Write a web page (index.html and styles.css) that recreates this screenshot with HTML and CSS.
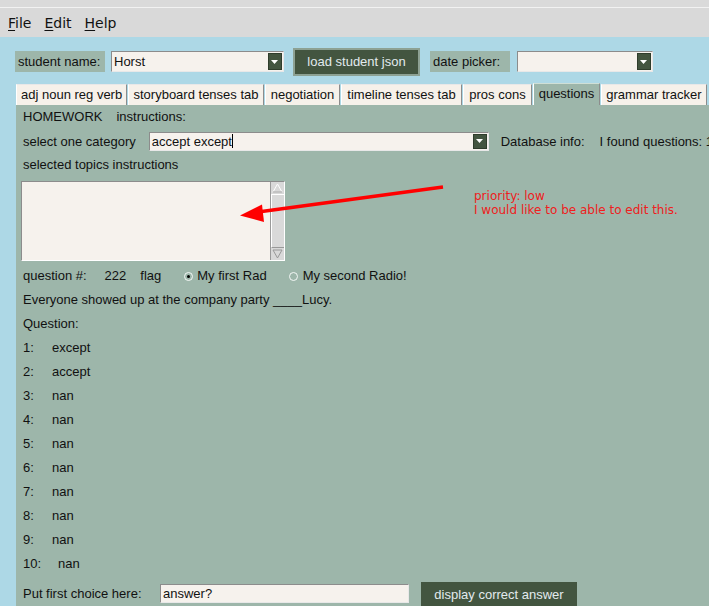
FILE: index.html
```html
<!DOCTYPE html>
<html>
<head>
<meta charset="utf-8">
<link rel="stylesheet" href="styles.css">
</head>
<body>
<div class="window">
  <div class="topstrip"></div>
  <div class="menubar">
    <span class="menu"><u>F</u>ile</span>
    <span class="menu"><u>E</u>dit</span>
    <span class="menu"><u>H</u>elp</span>
  </div>
  <div class="toolbar">
    <span class="lbl lbl-student">student name:</span>
    <div class="combo combo-student">
      <span class="combo-text">Horst</span>
      <span class="drop"><svg width="8" height="6" viewBox="0 0 8 6"><path d="M0 1h7l-3.5 4z" fill="#fff"/></svg></span>
    </div>
    <button class="btn btn-load">load student json</button>
    <span class="lbl lbl-date">date picker:</span>
    <div class="combo combo-date">
      <span class="combo-text"></span>
      <span class="drop"><svg width="8" height="6" viewBox="0 0 8 6"><path d="M0 1h7l-3.5 4z" fill="#fff"/></svg></span>
    </div>
  </div>
  <div class="notebook">
    <div class="tabs">
      <span class="tab t1">adj noun reg verb</span>
      <span class="tab t2">storyboard tenses tab</span>
      <span class="tab t3">negotiation</span>
      <span class="tab t4">timeline tenses tab</span>
      <span class="tab t5">pros cons</span>
      <span class="tab t6 active">questions</span>
      <span class="tab t7">grammar tracker</span>
    </div>
    <div class="panel">
      <div class="row r-home"><span>HOMEWORK</span><span class="instr">instructions:</span></div>
      <div class="row r-cat">
        <span>select one category</span>
        <div class="combo combo-cat">
          <span class="combo-text">accept except<span class="caret"></span></span>
          <span class="drop"><svg width="8" height="6" viewBox="0 0 8 6"><path d="M0 1h7l-3.5 4z" fill="#fff"/></svg></span>
        </div>
        <span class="dbinfo">Database info:</span>
        <span class="found">I found questions: 1</span>
      </div>
      <div class="row r-sel"><span>selected topics instructions</span></div>
      <div class="textarea">
        <div class="ta-body"></div>
        <div class="scrollbar">
          <span class="sb-btn sb-up"><svg width="11" height="10" viewBox="0 0 11 10"><path d="M5.5 1L10 9H1z" fill="#d9d9d9" stroke="#fff" stroke-width="1"/><path d="M10 9H1" stroke="#999"/></svg></span>
          <span class="sb-trough"></span>
          <span class="sb-btn sb-down"><svg width="11" height="10" viewBox="0 0 11 10"><path d="M1 1h9L5.5 9z" fill="#d9d9d9" stroke="#999" stroke-width="1"/></svg></span>
        </div>
      </div>
      <div class="row r-qnum">
        <span class="qlabel">question #:</span>
        <span class="qnum">222</span>
        <span class="flag">flag</span>
        <span class="radio on"></span><span class="rtext">My first Rad</span>
        <span class="radio"></span><span class="rtext">My second Radio!</span>
      </div>
      <div class="row"><span>Everyone showed up at the company party ____Lucy.</span></div>
      <div class="row"><span>Question:</span></div>
      <div class="row"><span class="num">1:</span><span>except</span></div>
      <div class="row"><span class="num">2:</span><span>accept</span></div>
      <div class="row"><span class="num">3:</span><span>nan</span></div>
      <div class="row"><span class="num">4:</span><span>nan</span></div>
      <div class="row"><span class="num">5:</span><span>nan</span></div>
      <div class="row"><span class="num">6:</span><span>nan</span></div>
      <div class="row"><span class="num">7:</span><span>nan</span></div>
      <div class="row"><span class="num">8:</span><span>nan</span></div>
      <div class="row"><span class="num">9:</span><span>nan</span></div>
      <div class="row"><span class="num num10">10:</span><span>nan</span></div>
      <div class="row r-put">
        <span class="putlbl">Put first choice here:</span>
        <div class="entry entry-answer">answer?</div>
        <button class="btn btn-display">display correct answer</button>
      </div>
    </div>
  </div>
  <div class="note">priority: low<br>I would like to be able to edit this.</div>
  <svg class="arrow" width="709" height="606" viewBox="0 0 709 606">
    <line x1="443" y1="187" x2="258" y2="212" stroke="#ff0000" stroke-width="3.5"/>
    <path d="M240 215.5 L262 204.5 L264 222 Z" fill="#ff0000"/>
  </svg>
</div>
</body>
</html>
```

FILE: styles.css
```css
* { box-sizing: border-box; }
html, body { margin: 0; padding: 0; }
body {
  width: 709px;
  height: 606px;
  overflow: hidden;
  background: #add8e6;
  font-family: "Liberation Sans", Arial, sans-serif;
  font-size: 13px;
  color: #111;
}
.window { position: relative; width: 709px; height: 606px; }
.topstrip {
  height: 8px;
  background: #dadada;
  border-bottom: 1px solid #f2f2f2;
}
.menubar {
  height: 29px;
  background: #d9d9d9;
  display: flex;
  align-items: center;
  padding-left: 8px;
  gap: 13px;
  font-family: "DejaVu Sans", sans-serif;
  font-size: 14px;
  color: #111;
}
.menu u { text-decoration-thickness: 1px; text-underline-offset: 2px; }

.toolbar {
  height: 46px;
  display: flex;
  align-items: center;
  padding-left: 15px;
  padding-top: 3px;
}
.toolbar > * { flex-shrink: 0; }
.lbl {
  background: #9db6aa;
  height: 21px;
  line-height: 21px;
  padding: 0 4px 0 3px;
}
.lbl-student { width: 90px; }
.combo {
  display: flex;
  background: #f6f2ed;
  border: 1px solid;
  border-color: #8c8c8c #e8e8e8 #e8e8e8 #8c8c8c;
  height: 21px;
  align-items: stretch;
}
.combo-text {
  flex: 1;
  padding-left: 2px;
  line-height: 19px;
}
.drop {
  width: 14px;
  background: #435540;
  display: flex;
  align-items: flex-end;
  justify-content: center;
  padding-bottom: 4px;
  margin: 1px;
  border: 1px solid #2f3d2c;
}
.combo-student { margin-left: 6px; width: 173px; }
.btn {
  font-family: "Liberation Sans", Arial, sans-serif;
  font-size: 13px;
  background: #435540;
  color: #e2eaee;
  border: 2px solid #8da193;
  padding: 0;
}
.btn-load { margin-left: 9px; width: 127px; height: 28px; }
.lbl-date { margin-left: 10px; width: 80px; }
.combo-date { margin-left: 7px; width: 136px; }

.notebook { margin-left: 16px; }
.tabs {
  display: flex;
  height: 22px;
  align-items: flex-end;
}
.tab {
  flex-shrink: 0;
  height: 21px;
  line-height: 20px;
  background: #f6f1ea;
  border-left: 1px solid #fff;
  border-right: 1px solid #8c8c8c;
  border-top: 1px solid #e8e8e8;
  margin-right: 1px;
  padding: 0 4px;
  text-align: center;
  white-space: nowrap;
}
.tab.active {
  background: #9db6aa;
  height: 22px;
  border-top-color: #cfdfd6;
}
.t1 { width: 111px; }
.t2 { width: 136px; }
.t3 { width: 75px; }
.t4 { width: 121px; }
.t5 { width: 69px; }
.t6 { width: 67px; }
.t7 { width: 106px; }

.panel {
  background: #9db6aa;
  height: 501px;
  padding-left: 5px;
}
.row {
  height: 24px;
  display: flex;
  align-items: center;
  padding-left: 2px;
  white-space: nowrap;
}
.row > * { flex-shrink: 0; }
.r-home { height: 23px; }
.instr { margin-left: 14px; }
.r-cat { height: 26px; }
.combo-cat { margin-left: 13px; width: 340px; height: 19px; }
.combo-cat .combo-text { line-height: 17px; }
.caret { display: inline-block; width: 1px; height: 14px; background: #000; vertical-align: -2px; }
.dbinfo { margin-left: 12px; }
.found { margin-left: 15px; }
.r-sel { height: 20px; }
.textarea {
  margin-top: 7px;
  margin-bottom: 2px;
  width: 264px;
  height: 80px;
  display: flex;
  border: 1px solid;
  border-color: #8c8c8c #fff #fff #8c8c8c;
  background: #f6f2ed;
}
.ta-body { flex: 1; }
.scrollbar {
  width: 14px;
  background: #d9d9d9;
  display: flex;
  flex-direction: column;
  border-left: 1px solid #9a9a9a;
}
.sb-btn { height: 12px; display: flex; align-items: center; justify-content: center; }
.sb-trough { flex: 1; border-top: 1px solid #fff; border-bottom: 1px solid #999; border-left: 1px solid #fff; }
.qnum { margin-left: 18px; }
.flag { margin-left: 14px; }
.radio {
  width: 9px; height: 9px;
  border-radius: 50%;
  border: 1px solid #f4f8f6;
  background: #9db6aa;
  margin-left: 23px;
  margin-right: 4px;
  position: relative;
  top: 1px;
}
.radio.on::after {
  content: "";
  position: absolute;
  left: 2px; top: 2px;
  width: 3px; height: 3px;
  border-radius: 50%;
  background: #000;
}
.radio + .rtext + .radio { margin-left: 22px; margin-right: 5px; }
.num { width: 29px; }
.num10 { width: 35px; }
.r-put { height: 31px; padding-top: 6px; align-items: center; }
.putlbl { width: 137px; }
.entry-answer {
  width: 249px;
  height: 19px;
  background: #f6f2ed;
  border: 1px solid;
  border-color: #8c8c8c #e8e8e8 #e8e8e8 #8c8c8c;
  padding-left: 2px;
  line-height: 17px;
}
.btn-display { margin-left: 12px; width: 156px; height: 25px; border: none; position: relative; top: 1px; }

.note {
  position: absolute;
  left: 474px;
  top: 189px;
  color: #ef2020;
  font-family: "DejaVu Sans", sans-serif;
  font-size: 12px;
  line-height: 14px;
}
.arrow { position: absolute; left: 0; top: 0; pointer-events: none; }
```
